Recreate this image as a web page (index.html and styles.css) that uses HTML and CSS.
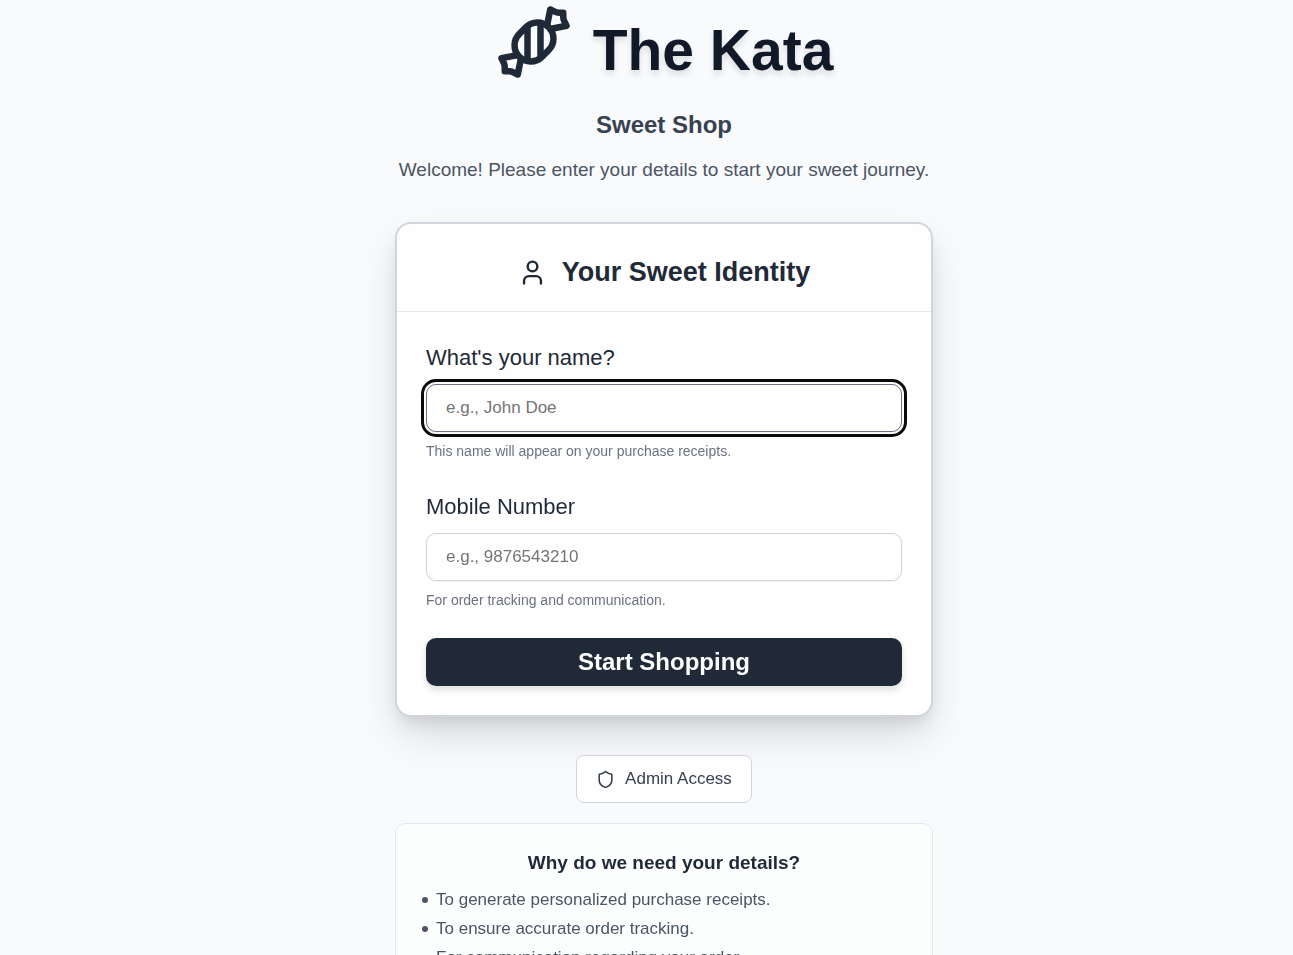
FILE: index.html
```html
<!DOCTYPE html>
<html lang="en">
<head>
<meta charset="utf-8">
<meta name="viewport" content="width=device-width, initial-scale=1">
<title>The Kata Sweet Shop</title>
<link rel="stylesheet" href="styles.css">
</head>
<body>
<main class="page">
  <header class="hero">
    <div class="brand">
      <svg class="brand-icon" viewBox="0 0 24 24" aria-hidden="true">
        <path d="m9.5 7.5-2 2a4.95 4.95 0 1 0 7 7l2-2a4.95 4.95 0 1 0-7-7Z"/>
        <path d="M14 6.5v10"/>
        <path d="M10 7.5v10"/>
        <path d="m16 7 1-5 1.37.68A3 3 0 0 0 19.7 3H21v1.3c0 .46.1.92.32 1.33L22 7l-5 1"/>
        <path d="m8 17-1 5-1.37-.68A3 3 0 0 0 4.3 21H3v-1.3a3 3 0 0 0-.32-1.33L2 17l5-1"/>
      </svg>
      <h1 class="brand-name">The Kata</h1>
    </div>
    <p class="tagline">Sweet Shop</p>
    <p class="welcome">Welcome! Please enter your details to start your sweet journey.</p>
  </header>

  <section class="card">
    <div class="card-header">
      <svg class="user-icon" viewBox="0 0 24 24" aria-hidden="true">
        <circle cx="12" cy="7" r="4"/>
        <path d="M19 21v-2a4 4 0 0 0-4-4H9a4 4 0 0 0-4 4v2"/>
      </svg>
      <h2 class="card-title">Your Sweet Identity</h2>
    </div>
    <form class="form">
      <div class="field">
        <label class="label" for="name">What's your name?</label>
        <input class="input" id="name" type="text" placeholder="e.g., John Doe" aria-describedby="name-hint" autofocus>
        <p class="hint" id="name-hint">This name will appear on your purchase receipts.</p>
      </div>
      <div class="field">
        <label class="label" for="mobile">Mobile Number</label>
        <input class="input" id="mobile" type="tel" placeholder="e.g., 9876543210" aria-describedby="mobile-hint">
        <p class="hint" id="mobile-hint">For order tracking and communication.</p>
      </div>
      <button class="submit" type="submit">Start Shopping</button>
    </form>
  </section>

  <button class="admin" type="button">
    <svg class="shield-icon" viewBox="0 0 24 24" aria-hidden="true">
      <path d="M20 13c0 5-3.5 7.5-7.66 8.95a1 1 0 0 1-.67-.01C7.5 20.5 4 18 4 13V6a1 1 0 0 1 1-1c2 0 4.5-1.2 6.24-2.72a1.17 1.17 0 0 1 1.52 0C14.51 3.81 17 5 19 5a1 1 0 0 1 1 1z"/>
    </svg>
    Admin Access
  </button>

  <section class="info">
    <h3 class="info-title">Why do we need your details?</h3>
    <ul class="info-list">
      <li>To generate personalized purchase receipts.</li>
      <li>To ensure accurate order tracking.</li>
      <li>For communication regarding your order.</li>
    </ul>
  </section>
</main>
</body>
</html>
```
FILE: styles.css
```css
* {
  box-sizing: border-box;
  margin: 0;
  padding: 0;
}

body {
  background: #f9fafc;
  color: #1f2937;
  font-family: "Liberation Sans", Arial, sans-serif;
}

svg {
  flex: none;
  fill: none;
  stroke: currentColor;
  stroke-width: 2;
  stroke-linecap: round;
  stroke-linejoin: round;
}

.page {
  display: flex;
  flex-direction: column;
  align-items: center;
  padding: 3px 0 40px 35px;
}

.hero {
  display: flex;
  flex-direction: column;
  align-items: center;
  margin-bottom: 38px;
  text-align: center;
}

.brand {
  display: flex;
  align-items: flex-end;
  gap: 20px;
  margin-bottom: 28px;
}

.brand-icon {
  width: 78px;
  height: 78px;
}

.brand-name {
  color: #111827;
  font-size: 57px;
  line-height: 62px;
  text-shadow: 0 4px 6px rgba(0, 0, 0, 0.12);
}

.tagline {
  margin-bottom: 15px;
  color: #374151;
  font-size: 24px;
  font-weight: 700;
  line-height: 32px;
}

.welcome {
  color: #4b5563;
  font-size: 19px;
  line-height: 28px;
}

.card,
.info {
  width: 100%;
  max-width: 538px;
}

.card {
  margin-bottom: 38px;
  border: 2px solid #d1d5db;
  border-radius: 16px;
  background: #fefefe;
  box-shadow: 0 20px 40px -4px rgba(0, 0, 0, 0.14), 0 8px 16px -4px rgba(0, 0, 0, 0.1);
}

.card-header {
  display: flex;
  align-items: center;
  justify-content: center;
  gap: 15px;
  padding: 32px 29px 23px;
  border-bottom: 1px solid #e5e7eb;
}

.user-icon {
  width: 29px;
  height: 29px;
}

.card-title {
  font-size: 27px;
  line-height: 32px;
}

.form {
  display: flex;
  flex-direction: column;
  gap: 28px;
  padding: 28px 29px 29px;
}

.field {
  display: flex;
  flex-direction: column;
}

.label {
  margin-bottom: 8px;
  font-size: 22px;
  line-height: 36px;
}

.input {
  width: 100%;
  height: 48px;
  padding: 0 19px;
  border: 1px solid #d1d5db;
  border-radius: 10px;
  background: #fefefe;
  color: #1f2937;
  font-family: inherit;
  font-size: 17px;
  box-shadow: 0 1px 2px rgba(0, 0, 0, 0.05);
}

.input::placeholder {
  color: #757575;
}

.input:focus {
  border-color: #6b7280;
  outline: 3px solid #0a0a0a;
  outline-offset: 2px;
}

.hint {
  margin-top: 9px;
  color: #6b7280;
  font-size: 14px;
  line-height: 20px;
}

.submit {
  height: 48px;
  border: 0;
  border-radius: 10px;
  background: #1f2937;
  color: #fefefe;
  font-family: inherit;
  font-size: 24px;
  font-weight: 700;
  box-shadow: 0 4px 7px rgba(0, 0, 0, 0.12);
}

.admin {
  display: flex;
  align-items: center;
  gap: 10px;
  height: 48px;
  margin-bottom: 20px;
  padding: 0 19px;
  border: 1px solid #d1d5db;
  border-radius: 8px;
  background: #fefefe;
  color: #374151;
  font-family: inherit;
  font-size: 17px;
}

.shield-icon {
  width: 19px;
  height: 19px;
}

.info {
  padding: 24px;
  border: 1px solid #e5e7eb;
  border-radius: 10px;
  background: #fcfefe;
}

.info-title {
  margin-bottom: 7px;
  font-size: 19px;
  line-height: 30px;
  text-align: center;
}

.info-list {
  color: #4b5563;
  font-size: 17px;
  line-height: 29px;
  list-style: none;
}

.info-list li {
  display: flex;
  align-items: center;
  gap: 8px;
  padding-left: 2px;
}

.info-list li::before {
  content: "";
  width: 6px;
  height: 6px;
  border-radius: 50%;
  background: currentColor;
}
```
